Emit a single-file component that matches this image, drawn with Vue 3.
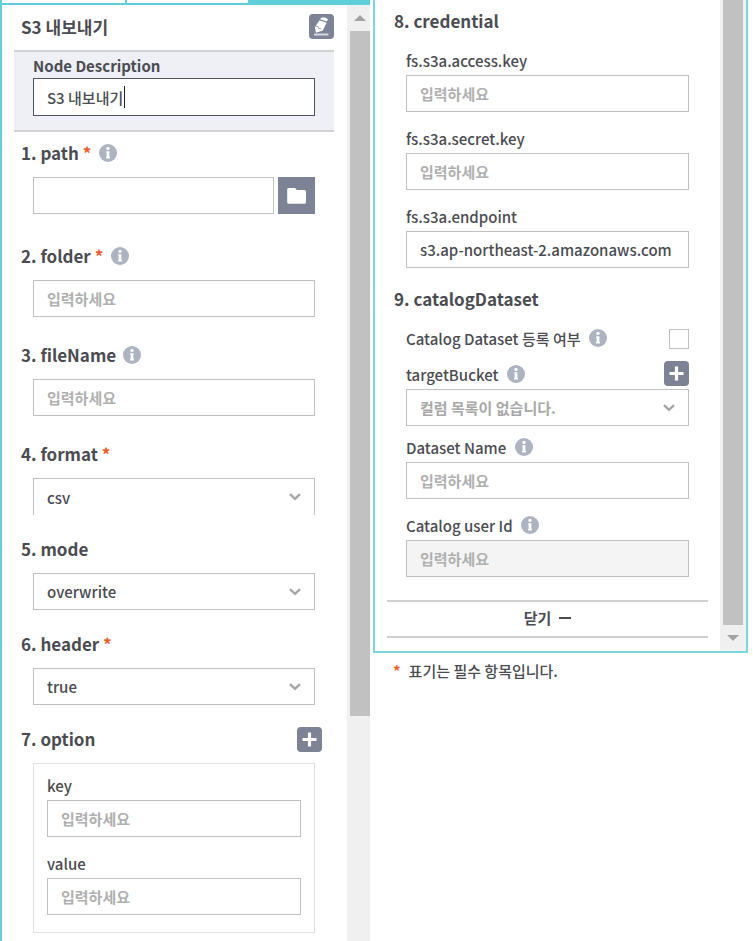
<script setup>
import { ref, h } from 'vue'

const description = ref('S3 내보내기')
const path = ref('')
const folder = ref('')
const fileName = ref('')
const format = ref('csv')
const mode = ref('overwrite')
const header = ref('true')
const options = ref([{ id: 'key', value: '' }, { id: 'value', value: '' }])
const credentials = ref([
  { id: 'fs.s3a.access.key', value: '' },
  { id: 'fs.s3a.secret.key', value: '' },
  { id: 'fs.s3a.endpoint', value: 's3.ap-northeast-2.amazonaws.com' },
])
const register = ref(false)
const bucket = ref('')
const datasetName = ref('')
const userId = ref('')
const hint = '입력하세요'

const InfoIcon = () =>
  h('svg', { width: 18, height: 18, viewBox: '0 0 18 18', 'aria-hidden': 'true' }, [
    h('circle', { cx: 9, cy: 9, r: 9, fill: '#aeb3c1' }),
    h('circle', { cx: 9, cy: 4.4, r: 1.7, fill: '#fff' }),
    h('path', { d: 'M7.2 7.2h3.2v5.8h.6v1.5H7V13h.6V8.7h-.4z', fill: '#fff' }),
  ])

const PlusIcon = () =>
  h('svg', { width: 25, height: 25, viewBox: '0 0 25 25', 'aria-hidden': 'true' }, [
    h('path', { d: 'M12.5 5.5v14M5.5 12.5h14', stroke: '#fff', 'stroke-width': 3.2 }),
  ])
</script>

<template>
  <main class="page">
    <section class="panel-left">
      <nav class="tabs" aria-label="tabs">
        <span class="tab"></span>
        <span class="tab"></span>
        <span class="tab active"></span>
      </nav>
      <div class="frame">
        <form class="content" @submit.prevent>
          <header class="head">
            <h1 class="title">S3 내보내기</h1>
            <button type="button" class="square">
              <svg width="25" height="25" viewBox="0 0 25 25" aria-hidden="true">
                <path d="M12 3.9q3.6-1.6 7 1.4l-1.2 2.3-6.8-2.3z" fill="#fff" />
                <path d="M10.4 6.2l7.2 2.5-3.8 7.8-6.8 2.3-1.2-5.4z" fill="#fff" />
                <path d="M6.8 12.4l2.2.2.6 1.8 2.6.4" fill="none" stroke="#9da1af" stroke-width="0.9" />
                <path d="M5 20.5h14.4" stroke="#d5d8e0" stroke-width="2" />
              </svg>
            </button>
          </header>

          <div class="describe">
            <label class="strong" for="desc">Node Description</label>
            <div class="typing">
              <input id="desc" v-model="description" type="text" />
              <span class="caret"></span>
            </div>
          </div>

          <div class="group wide">
            <label class="title" for="path">1. path <b class="req">*</b><InfoIcon /></label>
            <div class="inset browse">
              <input id="path" v-model="path" class="field" type="text" />
              <button type="button" class="folder">
                <svg width="37" height="37" viewBox="0 0 37 37" aria-hidden="true">
                  <path d="M10.5 11h6.2q.8 0 1.2.7l.8 1.3h7.8q1.5 0 1.5 1.5v10.7q0 1.5-1.5 1.5H10.7q-1.5 0-1.5-1.5V12.5q0-1.5 1.3-1.5z" fill="#fff" />
                </svg>
              </button>
            </div>
          </div>

          <div class="group medium">
            <label class="title" for="folder">2. folder <b class="req">*</b><InfoIcon /></label>
            <div class="inset"><input id="folder" v-model="folder" class="field" type="text" :placeholder="hint" /></div>
          </div>

          <div class="group medium">
            <label class="title" for="file">3. fileName <InfoIcon /></label>
            <div class="inset"><input id="file" v-model="fileName" class="field" type="text" :placeholder="hint" /></div>
          </div>

          <div class="group">
            <label class="title" for="format">4. format <b class="req">*</b></label>
            <div class="inset">
              <select id="format" v-model="format" class="field open"><option>csv</option></select>
            </div>
          </div>

          <div class="group">
            <label class="title" for="mode">5. mode</label>
            <div class="inset">
              <select id="mode" v-model="mode" class="field"><option>overwrite</option></select>
            </div>
          </div>

          <div class="group">
            <label class="title" for="header">6. header <b class="req">*</b></label>
            <div class="inset">
              <select id="header" v-model="header" class="field"><option>true</option></select>
            </div>
          </div>

          <div class="group last">
            <div class="bar">
              <h2 class="title">7. option</h2>
              <button type="button" class="square"><PlusIcon /></button>
            </div>
            <div class="inset">
              <div class="box stack">
                <div v-for="o in options" :key="o.id">
                  <label class="name" :for="o.id">{{ o.id }}</label>
                  <input :id="o.id" v-model="o.value" class="field" type="text" :placeholder="hint" />
                </div>
              </div>
            </div>
          </div>
        </form>
        <div class="scroll">
          <span class="arrow up"></span>
          <span class="thumb"></span>
          <span class="rest"></span>
        </div>
      </div>
    </section>

    <section class="side">
      <div class="panel-right">
        <form class="content" @submit.prevent>
          <h2 class="title first">8. credential</h2>
          <div class="inset stack">
            <div v-for="c in credentials" :key="c.id">
              <label class="name" :for="c.id">{{ c.id }}</label>
              <input :id="c.id" v-model="c.value" class="field" type="text" :placeholder="hint" />
            </div>
          </div>

          <h2 class="title second">9. catalogDataset</h2>
          <div class="inset catalog">
            <div class="row">
              <label class="name" for="register">Catalog Dataset 등록 여부 <InfoIcon /></label>
              <input id="register" v-model="register" class="check" type="checkbox" />
            </div>
            <div>
              <div class="row">
                <label class="name" for="bucket">targetBucket <InfoIcon /></label>
                <button type="button" class="square top"><PlusIcon /></button>
              </div>
              <select id="bucket" v-model="bucket" class="field empty">
                <option value="">컬럼 목록이 없습니다.</option>
              </select>
            </div>
            <div class="stack">
              <div>
                <label class="name" for="dataset">Dataset Name <InfoIcon /></label>
                <input id="dataset" v-model="datasetName" class="field" type="text" :placeholder="hint" />
              </div>
              <div>
                <label class="name" for="user">Catalog user Id <InfoIcon /></label>
                <input id="user" v-model="userId" class="field" type="text" disabled :placeholder="hint" />
              </div>
            </div>
          </div>

          <button type="button" class="close">닫기 <span class="dash"></span></button>
        </form>
        <div class="scroll">
          <span class="thumb"></span>
          <span class="arrow down"></span>
        </div>
      </div>
      <p class="note"><b class="req">*</b>표기는 필수 항목입니다.</p>
    </section>
  </main>
</template>

<style>
body {
  background: #fff;
}
</style>

<style scoped>
* {
  box-sizing: border-box;
}
.page {
  display: grid;
  grid-template-columns: 370fr 375fr;
  gap: 3px;
  padding-right: 5px;
  font-family: "Noto Sans CJK KR", "Noto Sans", sans-serif;
  font-size: 15px;
  font-weight: 500;
  color: #4b4c52;
}
input,
select,
button {
  font: inherit;
  color: inherit;
  margin: 0;
  padding: 0;
  border: 0;
  border-radius: 0;
  outline: 0;
}
svg {
  display: block;
  flex: none;
}
.panel-left {
  display: flex;
  flex-direction: column;
}
.tabs {
  display: grid;
  grid-template-columns: 125fr 123fr 122fr;
  height: 5px;
  border-bottom: 2px solid #5fd0da;
}
.tab {
  border-left: 2px solid #5fd0da;
}
.tab.active {
  background: #5fd0da;
}
.frame {
  display: flex;
  flex: 1;
  border-left: 2px solid #5fd0da;
}
.content {
  flex: 1;
  min-width: 0;
  padding: 0 12px;
}
.panel-left .content {
  padding-right: 13px;
}
.head {
  display: flex;
  justify-content: space-between;
  align-items: center;
  height: 45px;
  padding-bottom: 2px;
}
.title {
  display: flex;
  align-items: center;
  height: 24px;
  margin: 0;
  padding-left: 7px;
  font-size: 17px;
  font-weight: 700;
  line-height: 24px;
  white-space: pre;
}
.title svg {
  margin-left: 3px;
}
.square {
  width: 25px;
  height: 25px;
  border-radius: 4px;
  background: #7d8294;
}
.square.top {
  align-self: flex-start;
}
.describe {
  padding: 2px 19px 14px;
  border-top: 2px solid #d2d2d4;
  border-bottom: 2px solid #d2d2d4;
  background: #eff0f5;
}
.strong {
  display: block;
  font-size: 15px;
  font-weight: 700;
  line-height: 24px;
}
.typing {
  display: flex;
  align-items: center;
  height: 38px;
  padding-left: 13px;
  border: 1px solid #4d5264;
  background: #fff;
}
.typing input {
  field-sizing: content;
  background: none;
}
.caret {
  width: 1px;
  height: 22px;
  margin-left: 1px;
  background: #222;
}
.group {
  margin-bottom: 22px;
}
.group.wide {
  margin: 9px 0 30px;
}
.group.medium {
  margin-bottom: 26px;
}
.group.last {
  margin-bottom: 8px;
}
.req {
  margin-right: 5px;
  color: #f05a1e;
  font-weight: 700;
}
.inset {
  padding: 0 19px;
}
.group .inset {
  margin-top: 12px;
}
.field {
  display: block;
  width: 100%;
  height: 37px;
  padding: 0 13px;
  border: 1px solid #c0c0c0;
  background: #fff;
}
.field::placeholder {
  color: #b0b0b0;
  font-weight: 700;
  opacity: 1;
}
.field:disabled {
  background: #f4f4f4;
}
select.field {
  appearance: none;
  background: #fff url("data:image/svg+xml,%3Csvg xmlns='http://www.w3.org/2000/svg' width='12' height='8'%3E%3Cpath d='M1 1.2l5 4.6 5-4.6' fill='none' stroke='%23a6a6a6' stroke-width='2.4'/%3E%3C/svg%3E") no-repeat right 13px center;
}
.field.open {
  border-bottom: 0;
}
.field.empty {
  color: #a8a8a8;
  font-weight: 700;
}
.browse {
  display: flex;
  gap: 4px;
}
.folder {
  flex: none;
  width: 37px;
  height: 37px;
  background: #7d8294;
}
.bar {
  display: flex;
  justify-content: space-between;
  align-items: center;
  height: 24px;
  padding-right: 12px;
}
.box {
  padding: 8px 13px 17px;
  border: 1px solid #e2e2e2;
}
.stack {
  display: grid;
  gap: 13px;
}
.name {
  display: flex;
  align-items: center;
  height: 28px;
  line-height: 28px;
  white-space: pre;
}
.name svg {
  margin: 0 0 2px 5px;
}
.scroll {
  display: flex;
  flex-direction: column;
  flex: none;
  width: 23px;
  background: #f0f0f0;
}
.arrow {
  display: flex;
  justify-content: center;
  align-items: center;
  height: 26px;
}
.arrow::before {
  content: "";
  border: 6px solid transparent;
}
.arrow.up {
  padding-left: 3px;
}
.arrow.up::before {
  border-top: 0;
  border-bottom-color: #a3a3a3;
}
.arrow.down::before {
  border-bottom: 0;
  border-top-color: #a3a3a3;
}
.thumb {
  flex: 685;
  margin-left: 3px;
  background: #c1c1c1;
}
.rest {
  flex: 225;
}
.panel-right {
  display: flex;
  border: 2px solid #7bd7df;
  border-top: 0;
}
.panel-right .scroll {
  width: 26px;
}
.panel-right .thumb {
  margin-right: 3px;
}
.first {
  margin: 9px 0 14px;
}
.second {
  margin: 19px 0 14px;
}
.catalog {
  display: grid;
  gap: 8px;
}
.row {
  display: flex;
  justify-content: space-between;
  align-items: center;
  height: 28px;
}
.check {
  appearance: none;
  width: 20px;
  height: 20px;
  border: 1px solid #c0c0c0;
  background: #fff;
}
.check:checked {
  background: #7d8294;
}
.close {
  display: flex;
  justify-content: center;
  align-items: center;
  gap: 8px;
  width: 100%;
  height: 38px;
  margin: 23px 0 13px;
  padding-bottom: 3px;
  border-top: 2px solid #d0d0d0;
  border-bottom: 2px solid #d0d0d0;
  background: none;
  font-weight: 700;
}
.dash {
  width: 12px;
  height: 2px;
  background: #4b4c52;
}
.note {
  display: flex;
  gap: 3px;
  margin: 6px 0 0 20px;
  line-height: 24px;
}
</style>
